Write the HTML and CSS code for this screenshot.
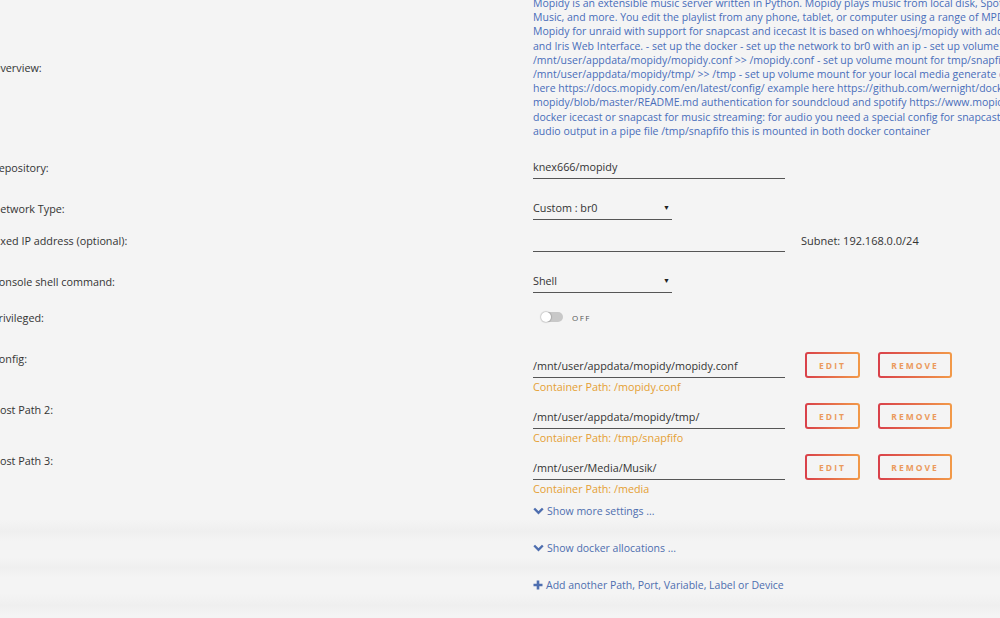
FILE: index.html
```html
<!DOCTYPE html>
<html lang="en">
  <head>
    <meta charset="utf-8" />
    <title>Update Container</title>
    <link rel="stylesheet" href="styles.css">
  </head>

  <body>
    <div class="form">
      <div class="row overview">
        <div class="label">Overview:</div>
        <div class="desc">
          Mopidy is an extensible music server written in Python. Mopidy plays music from local disk, Spotify, SoundCloud, Google Play<br>
          Music, and more. You edit the playlist from any phone, tablet, or computer using a range of MPD and web clients.<br>
          Mopidy for unraid with support for snapcast and icecast It is based on whhoesj/mopidy with added Spotify, SoundCloud<br>
          and Iris Web Interface. - set up the docker - set up the network to br0 with an ip - set up volume mount for config<br>
          /mnt/user/appdata/mopidy/mopidy.conf &gt;&gt; /mopidy.conf - set up volume mount for tmp/snapfifo<br>
          /mnt/user/appdata/mopidy/tmp/ &gt;&gt; /tmp - set up volume mount for your local media generate config<br>
          here https://docs.mopidy.com/en/latest/config/ example here https://github.com/wernight/docker-<br>
          mopidy/blob/master/README.md authentication for soundcloud and spotify https://www.mopidy.com/<br>
          docker icecast or snapcast for music streaming: for audio you need a special config for snapcast<br>
          audio output in a pipe file /tmp/snapfifo this is mounted in both docker container
        </div>
      </div>

      <div class="row repo">
        <div class="label">Repository:</div>
        <div class="field wide">knex666/mopidy</div>
      </div>

      <div class="row network">
        <div class="label">Network Type:</div>
        <div class="field select">Custom : br0<span class="caret">&#9660;</span></div>
      </div>

      <div class="row fixed-ip">
        <div class="label">Fixed IP address (optional):</div>
        <div class="inline">
          <div class="field wide"></div>
          <span class="note">Subnet: 192.168.0.0/24</span>
        </div>
      </div>

      <div class="row console">
        <div class="label">Console shell command:</div>
        <div class="field select">Shell<span class="caret">&#9660;</span></div>
      </div>

      <div class="row privileged">
        <div class="label">Privileged:</div>
        <div class="toggle">
          <span class="switch"><span class="knob"></span></span>
          <span class="toggle-text">OFF</span>
        </div>
      </div>

      <div class="row path">
        <div class="label">Config:</div>
        <div class="path-value">
          <div class="path-main">
            <div class="field wide">/mnt/user/appdata/mopidy/mopidy.conf</div>
            <button class="btn edit">EDIT</button>
            <button class="btn remove">REMOVE</button>
          </div>
          <div class="container-path">Container Path: /mopidy.conf</div>
        </div>
      </div>

      <div class="row path">
        <div class="label">Host Path 2:</div>
        <div class="path-value">
          <div class="path-main">
            <div class="field wide">/mnt/user/appdata/mopidy/tmp/</div>
            <button class="btn edit">EDIT</button>
            <button class="btn remove">REMOVE</button>
          </div>
          <div class="container-path">Container Path: /tmp/snapfifo</div>
        </div>
      </div>

      <div class="row path">
        <div class="label">Host Path 3:</div>
        <div class="path-value">
          <div class="path-main">
            <div class="field wide">/mnt/user/Media/Musik/</div>
            <button class="btn edit">EDIT</button>
            <button class="btn remove">REMOVE</button>
          </div>
          <div class="container-path">Container Path: /media</div>
        </div>
      </div>
    </div>

    <div class="more first">
      <a class="more-link">
        <svg width="11" height="8" viewBox="0 0 11 8"><path d="M1.2 1.5 L5.5 5.8 L9.8 1.5" fill="none" stroke="currentColor" stroke-width="2.4"/></svg>
        Show more settings ...
      </a>
    </div>
    <div class="more">
      <a class="more-link">
        <svg width="11" height="8" viewBox="0 0 11 8"><path d="M1.2 1.5 L5.5 5.8 L9.8 1.5" fill="none" stroke="currentColor" stroke-width="2.4"/></svg>
        Show docker allocations ...
      </a>
    </div>
    <div class="more">
      <a class="more-link">
        <svg width="10" height="10" viewBox="0 0 10 10"><path d="M5 0.5 V9.5 M0.5 5 H9.5" fill="none" stroke="currentColor" stroke-width="2.6"/></svg>
        Add another Path, Port, Variable, Label or Device
      </a>
    </div>
  </body>
</html>
```

FILE: styles.css
```css
html {
  font-family: "Open Sans", "Liberation Sans", sans-serif;
}

body {
  margin: 0;
  background-color: #f4f4f4;
  color: #303030;
  overflow: hidden;
  font-size: 11px;
}

.form {
  margin-left: -8px;
  margin-top: -4px;
}

.row {
  display: grid;
  grid-template-columns: 541px 1fr;
  align-items: center;
}

.label {
  font-size: 10.8px;
  color: #333;
}

.desc {
  font-size: 10.5px;
  line-height: 14.2px;
  color: #486dba;
  white-space: nowrap;
}

.field {
  height: 23px;
  line-height: 23px;
  border-bottom: 1px solid #555;
  font-size: 10.8px;
  color: #333;
  white-space: nowrap;
}

.field.wide {
  width: 252px;
}

.field.select {
  width: 139px;
  display: flex;
  justify-content: space-between;
}

.caret {
  font-size: 7px;
  margin-right: 2px;
  color: #222;
}

.repo {
  margin-top: 17px;
}

.network {
  margin-top: 17px;
}

.fixed-ip {
  margin-top: 8px;
}

.inline {
  display: flex;
  align-items: center;
  gap: 16px;
}

.note {
  font-size: 11px;
  color: #333;
}

.console {
  margin-top: 17px;
}

.privileged {
  margin-top: 12px;
  height: 24px;
}

.toggle {
  display: flex;
  align-items: center;
  gap: 9px;
  padding-left: 8px;
}

.switch {
  display: flex;
  align-items: center;
  width: 22px;
  height: 10px;
  border-radius: 5px;
  background-color: #c8c8c8;
}

.knob {
  width: 10px;
  height: 10px;
  border-radius: 50%;
  background-color: #fff;
  box-shadow: 0 0 1px 1px rgba(0, 0, 0, 0.15);
}

.toggle-text {
  font-size: 8px;
  letter-spacing: 1.5px;
  color: #555;
}

.path {
  align-items: start;
  margin-top: 25px;
}

.path + .path {
  margin-top: 10px;
}

.path .label {
  margin-top: -3px;
}

.path-main {
  display: flex;
  align-items: center;
}

.btn {
  height: 26px;
  margin-top: -2px;
  padding: 0;
  border: 2px solid transparent;
  border-radius: 3px;
  background: linear-gradient(#f4f4f4, #f4f4f4) padding-box,
    linear-gradient(90deg, #d9404a, #f29a48) border-box;
  font-family: inherit;
  font-size: 8.5px;
  font-weight: 700;
  letter-spacing: 2px;
  color: #eb9a5c;
}

.btn.edit {
  width: 55px;
  margin-left: 20px;
}

.btn.remove {
  width: 74px;
  margin-left: 18px;
}

.container-path {
  margin-top: 1px;
  font-size: 10.8px;
  line-height: 16px;
  color: #e5a033;
}

.more {
  padding-left: 533px;
  height: 37px;
  background: linear-gradient(#f4f4f4 0, #f4f4f4 16px, #efefef 27px, #f4f4f4 37px);
}

.more.first {
  margin-top: 7px;
}

.more-link {
  display: flex;
  align-items: center;
  gap: 3px;
  height: 14px;
  font-size: 10.5px;
  color: #4e6eaf;
}
```
